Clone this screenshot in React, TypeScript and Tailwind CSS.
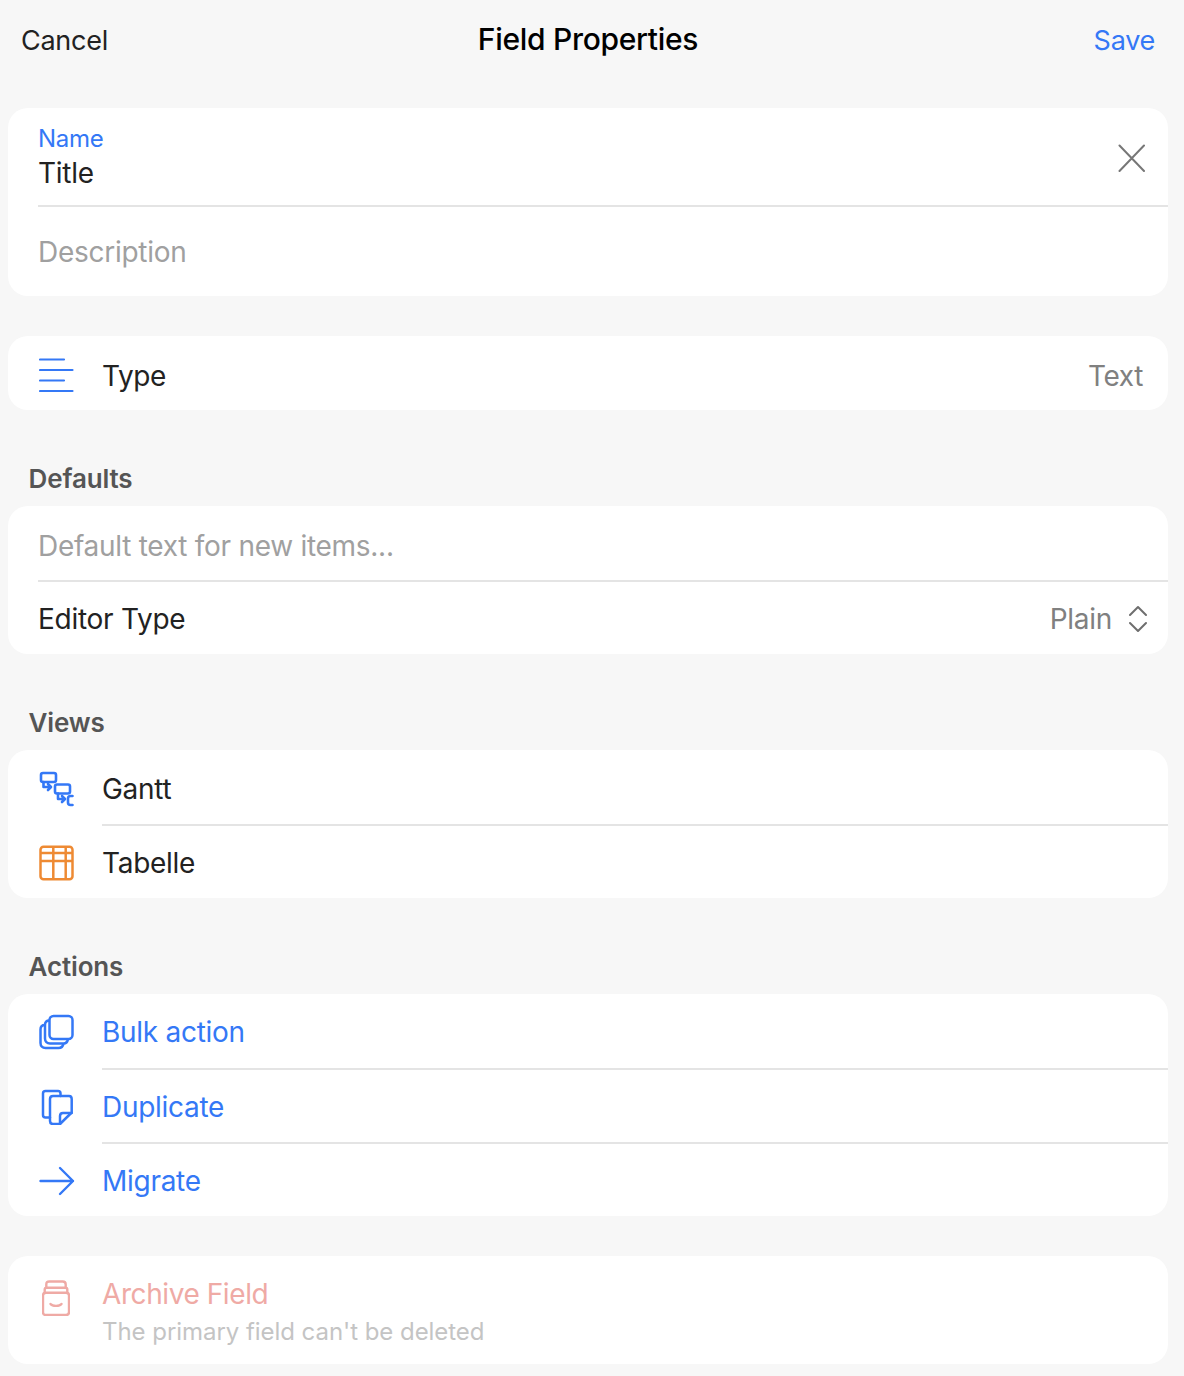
const Divider = ({ inset }: { inset: string }) => <div className={`h-[2px] bg-[#e4e4e4] ${inset}`} />;

const IconSlot = ({ children }: { children: React.ReactNode }) => <div className="flex w-[94px] shrink-0 pl-[31px]">{children}</div>;

const Row = ({ icon, label, color = "text-[#222222]", first }: { icon: React.ReactNode; label: string; color?: string; first?: string }) => (
  <div className={`flex items-center ${first ?? "h-[72px] pt-[2px]"}`}>
    <IconSlot>{icon}</IconSlot>
    <span className={`text-[28px] tracking-[-0.01em] ${color}`}>{label}</span>
  </div>
);

const SectionLabel = ({ children }: { children: React.ReactNode }) => (
  <div className="h-[56px] pt-[14px] pl-[20.5px] text-[26px] leading-[30px] font-semibold tracking-[-0.005em] text-[#555555]">{children}</div>
);

const Card = ({ children }: { children: React.ReactNode }) => (
  <div className="overflow-hidden rounded-[20px] bg-white">{children}</div>
);

const blue = "#3478f6";

const LinesIcon = () => (
  <svg width="36" height="36" viewBox="0 0 36 36" fill="none" stroke={blue} strokeWidth="2.2" strokeLinecap="round">
    <path d="M1 1.5H25M1 12H33.5M1 22.5H25M1 33H33.5" />
  </svg>
);

const GanttIcon = () => (
  <svg width="36" height="36" viewBox="0 0 36 36" fill="none" stroke={blue} strokeWidth="2.6" strokeLinecap="round" strokeLinejoin="round">
    <rect x="2" y="2" width="15" height="9" rx="2" />
    <path d="M4.5 11V16H11M9 13L12 16L9 19" />
    <rect x="16" y="13.5" width="15" height="9" rx="2" />
    <path d="M19 22.5V28H25M23 25L26 28L23 31" />
    <path d="M33.5 25H31.5C30 25 29 26 29 27.5V31.5C29 33 30 34 31.5 34H33.5" />
  </svg>
);

const TableIcon = () => (
  <svg width="36" height="36" viewBox="0 0 36 36" fill="none" stroke="#ee8a33" strokeWidth="2.5" strokeLinejoin="round">
    <rect x="1.5" y="1.7" width="32" height="32.5" rx="3" />
    <path d="M1.5 8H33.5M1.5 16H33.5M14.3 1.7V34.2M26.7 1.7V34.2" />
  </svg>
);

const StackIcon = () => (
  <svg width="36" height="36" viewBox="0 0 36 36" fill="none" stroke={blue} strokeWidth="2.5" strokeLinejoin="round">
    <rect x="10.5" y="2" width="23" height="23" rx="4" />
    <path d="M10.5 6.5C7.5 6.5 6 8 6 11V24.5C6 27.5 8 29.5 11 29.5H24.5C27 29.5 28.5 28 29 25" />
    <path d="M6 11C3 11 1.5 12.5 1.5 15.5V29C1.5 32 3.5 34 6.5 34H19.5C22 34 24 32.5 24.5 29.5" />
  </svg>
);

const DuplicateIcon = () => (
  <svg width="36" height="36" viewBox="0 0 36 36" fill="none" stroke={blue} strokeWidth="2.5" strokeLinecap="round" strokeLinejoin="round">
    <path d="M11 28.5H6.5C5 28.5 4 27.5 4 26V4.5C4 3 5 2 6.5 2H19C20.5 2 21.5 3 21.5 4.5V7" />
    <path d="M11 10C11 8 12 7 14 7H30C32 7 32.7 8 32.7 10V23.5L21 35H14C12 35 11 34 11 32Z" />
    <path d="M32.7 24H24C22 24 21 25 21 27V35" />
  </svg>
);

const ArrowIcon = () => (
  <svg width="36" height="30" viewBox="0 0 36 30" fill="none" stroke={blue} strokeWidth="2.4" strokeLinecap="round" strokeLinejoin="round">
    <path d="M1.5 15H34M21 2L34 15L21 28" />
  </svg>
);

const ArchiveIcon = () => (
  <svg width="28" height="36" viewBox="0 0 28 36" fill="none" stroke="#efaaa5" strokeWidth="2.4" strokeLinecap="round" strokeLinejoin="round">
    <path d="M1 15.5C1 13.5 2 12.7 4 12.7H24C26 12.7 27 13.5 27 15.5V32C27 34 26 35 24 35H4C2 35 1 34 1 32Z" />
    <path d="M2.7 12.7V9.5C2.7 8.3 3.3 7.7 4.5 7.7H23.5C24.7 7.7 25.3 8.3 25.3 9.5V12.7" />
    <path d="M4.3 7.7V4.5C4.3 2.5 5.3 1.5 7.3 1.5H20.7C22.7 1.5 23.7 2.5 23.7 4.5V7.7" />
    <path d="M8.5 24C10.5 26.5 17.5 26.5 19.5 24" />
  </svg>
);

export default function App() {
  return (
    <div className="min-h-[1376px] w-[1184px] bg-[#f7f7f7] pr-[16px] pl-[8px] font-['Inter',sans-serif]">
      <header className="flex h-[108px] items-start justify-between pt-[23px] pr-[13px] pl-[13px] text-[27px] tracking-[-0.01em]">
        <span className="w-[200px] leading-[36px] text-[#222222]">Cancel</span>
        <span className="-mt-[1px] text-[30px] leading-[34px] font-medium tracking-[-0.01em] text-black">Field Properties</span>
        <span className="w-[200px] text-right leading-[36px] text-[#3478f6]">Save</span>
      </header>

      <Card>
        <div className="flex h-[97px] items-center pr-[21px] pl-[30px]">
          <div className="flex-1 pt-[5px]">
            <div className="text-[24px] leading-[28px] tracking-[-0.01em] text-[#3478f6]">Name</div>
            <div className="text-[28px] leading-[41px] tracking-[-0.01em] text-[#222222]">Title</div>
          </div>
          <svg width="30" height="30" viewBox="0 0 30 30" fill="none" stroke="#777777" strokeWidth="2" strokeLinecap="round">
            <path d="M2.5 3.5L27 29M27 3.5L2.5 29" />
          </svg>
        </div>
        <Divider inset="ml-[30px]" />
        <div className="flex h-[89px] items-center pl-[30px] text-[28px] tracking-[-0.01em] text-[#a0a0a0]">Description</div>
      </Card>

      <div className="mt-[40px]">
        <Card>
          <div className="flex h-[74px] items-center justify-between pt-[6px] pr-[25px]">
            <div className="flex items-center">
              <IconSlot><LinesIcon /></IconSlot>
              <span className="text-[28px] tracking-[-0.015em] text-[#222222]">Type</span>
            </div>
            <span className="text-[28px] tracking-[-0.015em] text-[#808080]">Text</span>
          </div>
        </Card>
      </div>

      <div className="mt-[40px]">
        <SectionLabel>Defaults</SectionLabel>
      </div>
      <Card>
        <div className="flex h-[74px] items-center pt-[6px] pl-[30px] text-[28px] tracking-[-0.01em] text-[#a0a0a0]">Default text for new items...</div>
        <Divider inset="ml-[30px]" />
        <div className="flex h-[72px] items-center justify-between pt-[2px] pr-[21px] pl-[30px]">
          <span className="text-[28px] tracking-[-0.01em] text-[#222222]">Editor Type</span>
          <div className="flex items-center gap-[17px]">
            <span className="text-[28px] tracking-[-0.01em] text-[#808080]">Plain</span>
            <svg width="18" height="28" viewBox="0 0 18 28" fill="none" stroke="#6e6e6e" strokeWidth="2" strokeLinecap="round" strokeLinejoin="round">
              <path d="M1 10L9 2L17 10M1 18L9 26L17 18" />
            </svg>
          </div>
        </div>
      </Card>

      <div className="mt-[40px]">
        <SectionLabel>Views</SectionLabel>
      </div>
      <Card>
        <Row icon={<GanttIcon />} label="Gantt" first="h-[74px] pt-[4px]" />
        <Divider inset="ml-[94px]" />
        <Row icon={<TableIcon />} label="Tabelle" />
      </Card>

      <div className="mt-[40px]">
        <SectionLabel>Actions</SectionLabel>
      </div>
      <Card>
        <Row icon={<StackIcon />} label="Bulk action" color="text-[#3478f6]" first="h-[74px] pt-[2px]" />
        <Divider inset="ml-[94px]" />
        <Row icon={<DuplicateIcon />} label="Duplicate" color="text-[#3478f6]" />
        <Divider inset="ml-[94px]" />
        <Row icon={<ArrowIcon />} label="Migrate" color="text-[#3478f6]" />
      </Card>

      <div className="mt-[40px]">
        <Card>
          <div className="flex h-[108px] items-center pt-[2px]">
            <div className="flex w-[94px] shrink-0 self-start pt-[22px] pl-[34px]"><ArchiveIcon /></div>
            <div>
              <div className="text-[28px] leading-[36px] tracking-[-0.015em] text-[#efaaa5]">Archive Field</div>
              <div className="mt-[5px] text-[24px] leading-[30px] tracking-[-0.002em] text-[#c4c4c4]">The primary field can't be deleted</div>
            </div>
          </div>
        </Card>
      </div>
    </div>
  );
}
